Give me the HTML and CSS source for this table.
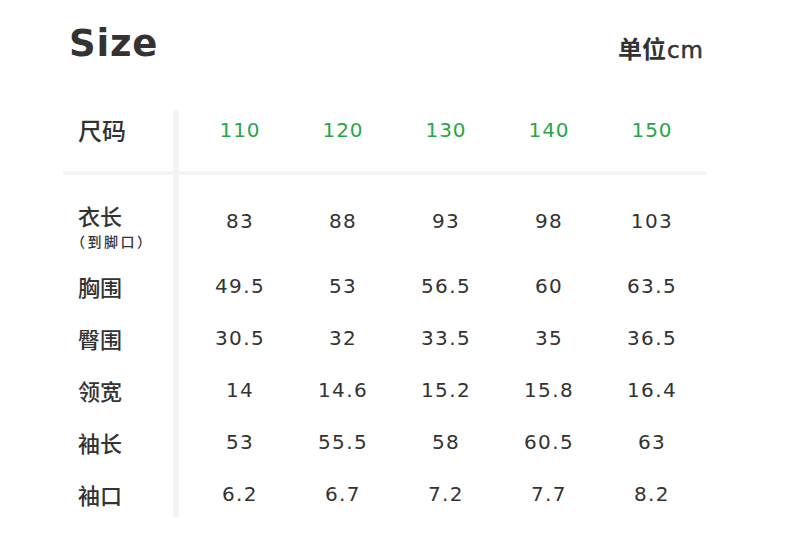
FILE: index.html
```html
<!DOCTYPE html>
<html lang="zh">
<head>
<meta charset="utf-8">
<title>Size</title>
<link rel="stylesheet" href="styles.css">
</head>
<body>
<div class="page">
  <header class="top">
    <h1 class="title">Size</h1>
    <div class="unit">单位<span class="unit-latin">cm</span></div>
  </header>
  <div class="table">
    <div class="row head">
      <div class="label">尺码</div>
      <div class="cells">
        <span>110</span><span>120</span><span>130</span><span>140</span><span>150</span>
      </div>
    </div>
    <div class="sep"></div>
    <div class="row first">
      <div class="label">衣长<small>（到脚口）</small></div>
      <div class="cells">
        <span>83</span><span>88</span><span>93</span><span>98</span><span>103</span>
      </div>
    </div>
    <div class="row">
      <div class="label">胸围</div>
      <div class="cells"><span>49.5</span><span>53</span><span>56.5</span><span>60</span><span>63.5</span></div>
    </div>
    <div class="row">
      <div class="label">臀围</div>
      <div class="cells"><span>30.5</span><span>32</span><span>33.5</span><span>35</span><span>36.5</span></div>
    </div>
    <div class="row">
      <div class="label">领宽</div>
      <div class="cells"><span>14</span><span>14.6</span><span>15.2</span><span>15.8</span><span>16.4</span></div>
    </div>
    <div class="row">
      <div class="label">袖长</div>
      <div class="cells"><span>53</span><span>55.5</span><span>58</span><span>60.5</span><span>63</span></div>
    </div>
    <div class="row last">
      <div class="label">袖口</div>
      <div class="cells"><span>6.2</span><span>6.7</span><span>7.2</span><span>7.7</span><span>8.2</span></div>
    </div>
  </div>
</div>
</body>
</html>
```

FILE: styles.css
```css
html, body {
  margin: 0;
  padding: 0;
  background: #ffffff;
}

.page {
  width: 790px;
  height: 539px;
  color: #333333;
  font-family: "Noto Sans CJK SC", "DejaVu Sans", sans-serif;
}

.top {
  display: flex;
  justify-content: space-between;
  align-items: flex-start;
  height: 110px;
  padding: 22px 86px 0 69px;
  box-sizing: border-box;
}

.title {
  margin: 0;
  font-family: "DejaVu Sans", sans-serif;
  font-weight: bold;
  font-size: 37px;
  line-height: 44px;
  letter-spacing: 0.8px;
  color: #333333;
}

.unit {
  margin-top: 4px;
  font-size: 24px;
  line-height: 44px;
  font-weight: 700;
  color: #333333;
}

.unit-latin {
  font-family: "DejaVu Sans", sans-serif;
  font-size: 23px;
  font-weight: normal;
  -webkit-text-stroke: 0.5px #333333;
  letter-spacing: 1px;
  margin-left: 1px;
}

.table {
  margin-left: 63px;
  width: 643px;
  display: flex;
  flex-direction: column;
}

.row {
  display: flex;
  height: 52px;
}

.label {
  width: 110px;
  box-sizing: border-box;
  padding-left: 15px;
  font-size: 22px;
  font-weight: 500;
  line-height: 28px;
  display: flex;
  flex-direction: column;
  justify-content: center;
}

.label small {
  font-size: 14px;
  line-height: 16px;
  margin-top: 4px;
  font-weight: 500;
  margin-left: -7px;
  letter-spacing: 2.5px;
}

.cells {
  border-left: 6px solid #f4f4f4;
  padding-left: 9px;
  display: grid;
  grid-template-columns: repeat(5, 103px);
  align-items: center;
}

.cells span {
  text-align: center;
  font-family: "DejaVu Sans", sans-serif;
  font-size: 20px;
  letter-spacing: 1.4px;
  line-height: 28px;
  padding-left: 1px;
}

.head {
  height: 61px;
}

.head .label {
  justify-content: flex-start;
  padding-top: 6px;
  font-size: 24px;
}

.head .cells {
  align-items: start;
  padding-top: 6px;
}

.head .cells span {
  color: #2ba548;
  letter-spacing: 1px;
}

.sep {
  height: 4px;
  background: #f4f4f4;
}

.first {
  height: 85px;
}

.first .label {
  justify-content: flex-start;
  padding-top: 26px;
}

.first .cells {
  align-items: start;
  padding-top: 32px;
}

.last {
  height: 49px;
}

.last .cells {
  align-items: start;
  padding-top: 12px;
}

.last .label {
  justify-content: flex-start;
  padding-top: 12px;
}
```
